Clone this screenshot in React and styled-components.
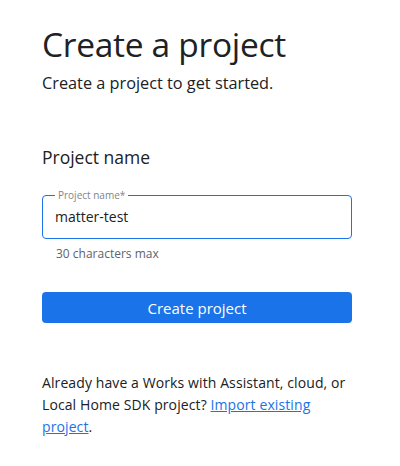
import React from 'react'
import styled, { createGlobalStyle } from 'styled-components'

const GlobalStyle = createGlobalStyle`
  body {
    margin: 0;
    background: #fff;
    font-family: "Open Sans", "Roboto", sans-serif;
    color: #202124;
  }
`

const Page = styled.div`
  width: 310px;
  padding: 22px 0 0 42px;
`

const Title = styled.h1`
  margin: 0;
  font-size: 33.5px;
  font-weight: 400;
  line-height: 44px;
  letter-spacing: -0.3px;
  color: #202124;
`

const Subtitle = styled.p`
  margin: 6px 0 0;
  font-size: 16.3px;
  line-height: 22px;
  color: #202124;
`

const SectionTitle = styled.h2`
  margin: 51px 0 0;
  font-size: 17.5px;
  font-weight: 400;
  line-height: 24px;
`

const Field = styled.fieldset`
  margin: 21px 0 0;
  padding: 0 12px;
  height: 49px;
  box-sizing: border-box;
  border: 1.5px solid #1a73e8;
  border-radius: 4px;
  display: flex;
  align-items: center;
`

const FieldLabel = styled.legend`
  padding: 0 3px;
  font-size: 10px;
  line-height: 10px;
  color: #80868b;
`

const Input = styled.input`
  border: none;
  outline: none;
  padding: 0;
  margin-top: -5px;
  width: 100%;
  font: inherit;
  font-size: 14px;
  color: #202124;
  caret-color: #1a73e8;
`

const Hint = styled.div`
  margin: 7px 0 0 14px;
  font-size: 12px;
  line-height: 16px;
  color: #5f6368;
`

const Button = styled.button`
  margin-top: 30px;
  width: 100%;
  height: 31px;
  border: none;
  border-radius: 4px;
  background: #1a73e8;
  color: #fff;
  font: inherit;
  font-size: 15px;
  font-weight: 500;
`

const Note = styled.p`
  margin: 49px 0 0;
  font-size: 14px;
  line-height: 22px;
  letter-spacing: 0.1px;
  color: #202124;
`

const Link = styled.a`
  color: #1a73e8;
  text-decoration: underline;
`

export default function App() {
  return (
    <>
      <GlobalStyle />
      <Page>
        <Title>Create a project</Title>
        <Subtitle>Create a project to get started.</Subtitle>
        <SectionTitle>Project name</SectionTitle>
        <Field>
          <FieldLabel>Project name*</FieldLabel>
          <Input defaultValue="matter-test" />
        </Field>
        <Hint>30 characters max</Hint>
        <Button>Create project</Button>
        <Note>
          Already have a Works with Assistant, cloud, or Local Home SDK project?{' '}
          <Link href="#">Import existing project</Link>.
        </Note>
      </Page>
    </>
  )
}
